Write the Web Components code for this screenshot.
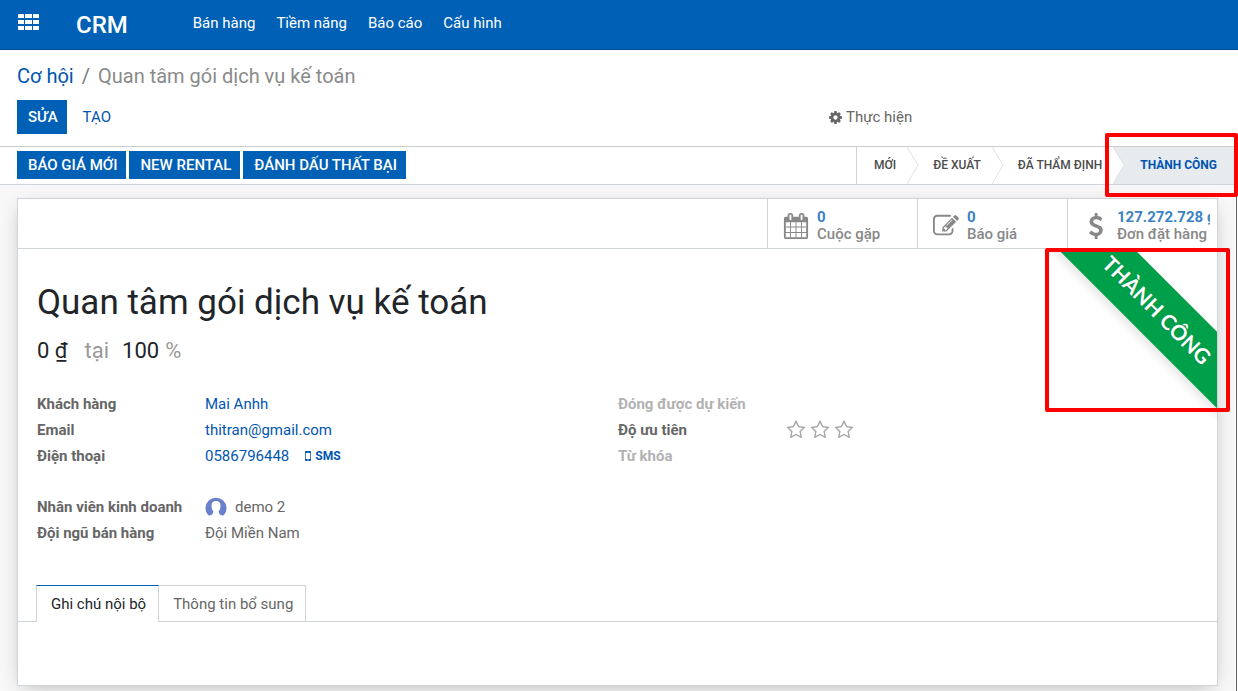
<!DOCTYPE html>
<html lang="vi">
<head>
<meta charset="utf-8">
<meta name="viewport" content="width=device-width, initial-scale=1">
<title>CRM - Quan tâm gói dịch vụ kế toán</title>
<style>
:root { --brand: #0060b6; --link: #0055b0; --line: #ced4da; --text: #666; --mark: #fe0000; }
html, body { margin: 0; height: 100%; }
body { font: 15px/20px Roboto, "Noto Sans", sans-serif; color: var(--text); background: #fff; }
</style>
</head>
<body>
<crm-app></crm-app>
<script>
const define = (name, html, setup) => {
  const template = document.createElement('template');
  template.innerHTML = html;
  customElements.define(name, class extends HTMLElement {
    constructor() {
      super();
      this.attachShadow({ mode: 'open' }).append(template.content.cloneNode(true));
    }
    connectedCallback() { if (setup) setup(this, this.shadowRoot); }
  });
};

const ICONS = {
  cog: 'M1152 896q0-106-75-181t-181-75-181 75-75 181 75 181 181 75 181-75 75-181zm512-109v222q0 12-8 23t-20 13l-185 28q-19 54-39 91 35 50 107 138 10 12 10 25t-9 23q-27 37-99 108t-94 71q-12 0-26-9l-138-108q-44 23-91 38-16 136-29 186-7 28-36 28h-222q-14 0-24.500-8.500t-11.500-21.500l-28-184q-49-16-90-37l-141 107q-10 9-25 9-14 0-25-11-126-114-165-168-7-10-7-23 0-12 8-23 15-21 51-66.500t54-70.500q-27-50-41-99l-183-27q-13-2-21-12.500t-8-23.500v-222q0-12 8-23t19-13l186-28q14-46 39-92-40-57-107-138-10-12-10-24 0-10 9-23 26-36 98.500-107.500t94.500-71.500q13 0 26 10l138 107q44-23 91-38 16-136 29-186 7-28 36-28h222q14 0 24.500 8.500t11.500 21.500l28 184q49 16 90 37l142-107q9-9 24-9 13 0 25 10 129 119 165 170 7 8 7 22 0 12-8 23-15 21-51 66.500t-54 70.500q26 50 41 98l183 28q13 2 21 12.500t8 23.500z',
  calendar: 'M192 1664h288v-288h-288v288zm352 0h320v-288h-320v288zm-352-352h288v-320h-288v320zm352 0h320v-320h-320v320zm-352-384h288v-288h-288v288zm736 736h320v-288h-320v288zm-384-736h320v-288h-320v288zm768 736h288v-288h-288v288zm-384-352h320v-320h-320v320zm-352-864v-288q0-13-9.500-22.500t-22.500-9.500h-64q-13 0-22.500 9.500t-9.500 22.500v288q0 13 9.500 22.500t22.500 9.500h64q13 0 22.500-9.500t9.500-22.500zm736 864h288v-320h-288v320zm-384-384h320v-288h-320v288zm384 0h288v-288h-288v288zm32-480v-288q0-13-9.500-22.500t-22.500-9.500h-64q-13 0-22.500 9.500t-9.500 22.500v288q0 13 9.500 22.500t22.500 9.500h64q13 0 22.500-9.500t9.500-22.500zm384-64v1280q0 52-38 90t-90 38h-1408q-52 0-90-38t-38-90v-1280q0-52 38-90t90-38h128v-96q0-66 47-113t113-47h64q66 0 113 47t47 113v96h384v-96q0-66 47-113t113-47h64q66 0 113 47t47 113v96h128q52 0 90 38t38 90z',
  edit: 'M888 1184l116-116-152-152-116 116v56h96v96h56zm440-720q-16-16-33 1l-350 350q-17 17-1 33t33-1l350-350q17-17 1-33zm80 594v190q0 119-84.500 203.500t-203.500 84.500h-832q-119 0-203.500-84.500t-84.500-203.500v-832q0-119 84.500-203.500t203.500-84.500h832q63 0 117 25 15 7 18 23 3 17-9 29l-49 49q-14 14-32 8-23-6-45-6h-832q-66 0-113 47t-47 113v832q0 66 47 113t113 47h832q66 0 113-47t47-113v-126q0-13 9-22l64-64q15-15 35-7t20 29zm-96-738l288 288-672 672h-288v-288zm444 132l-92 92-288-288 92-92q28-28 68-28t68 28l152 152q28 28 28 68t-28 68z',
  dollar: 'M1362 1185q0 153-99.500 263.500t-258.500 136.500v175q0 14-9 23t-23 9h-135q-13 0-22.500-9.500t-9.500-22.500v-175q-66-9-127.500-31t-101.500-44.500-74-48-46.500-37.500-17.500-18q-17-21-2-41l103-135q7-10 23-12 15-2 24 9l2 2q113 99 243 125 37 8 74 8 81 0 142.500-43t61.500-122q0-28-15-53t-33.500-42-58.500-37.500-66-32-80-32.500q-39-16-61.500-25t-61.500-26.500-62.500-31-56.500-35.500-53.500-42.500-43.500-49-35.500-58-21-66.500-8.500-78q0-138 98-242t255-134v-180q0-13 9.500-22.500t22.500-9.500h135q14 0 23 9t9 23v176q57 6 110.500 23t87 33.500 63.500 37.500 39 29 15 14q17 18 5 38l-81 146q-8 15-23 16-14 3-27-7-3-3-14.500-12t-39-26.500-58.500-32-74.500-26-85.500-11.500q-95 0-155 43t-60 111q0 26 8.500 48t29.500 41.500 39.500 33 56 31 60.500 27 70 27.500q53 20 81 31.500t76 35 75.500 42.500 62 50 53 63.500 31.500 76.500 13 94z',
  star: 'M1201 1004l306-297-422-62-189-382-189 382-422 62 306 297-73 421 378-199 377 199zm527-357q0 22-26 48l-363 354 86 500q1 7 1 20 0 50-41 50-19 0-40-12l-449-236-449 236q-22 12-40 12-21 0-31.500-14.500t-10.500-35.500q0-6 2-20l86-500-364-354q-25-27-25-48 0-37 56-46l502-73 225-455q19-41 49-41t49 41l225 455 502 73q56 9 56 46z',
  mobile: 'M976 1408q0-33-23.500-56.500t-56.500-23.500-56.500 23.500-23.500 56.500 23.500 56.500 56.500 23.500 56.500-23.500 23.500-56.500zm208-160v-704q0-13-9.500-22.500t-22.500-9.500h-512q-13 0-22.500 9.500t-9.500 22.500v704q0 13 9.500 22.500t22.500 9.500h512q13 0 22.500-9.500t9.500-22.500zm-192-848q0-16-16-16h-160q-16 0-16 16t16 16h160q16 0 16-16zm288-16v1024q0 52-38 90t-90 38h-512q-52 0-90-38t-38-90v-1024q0-52 38-90t90-38h512q52 0 90 38t38 90z'
};

define('crm-icon', `
<style>:host{display:inline-block;flex:none;width:16px;height:16px}svg{display:block;width:100%;height:100%;fill:currentColor;overflow:visible}</style>
<svg viewBox="0 0 1792 1792" aria-hidden="true"><path/></svg>`,
(el, root) => root.querySelector('path').setAttribute('d', ICONS[el.getAttribute('name')]));

/* Red frame laid over the area it is placed in */
define('crm-highlight', `
<style>:host{position:absolute;inset:0;border:4px solid var(--mark);border-radius:2px;pointer-events:none;z-index:5}</style>`);

define('crm-button', `
<style>
:host{display:block}
button{display:block;box-sizing:border-box;height:34px;padding:0 9px 0 11px;border:0;margin:0;font:inherit;font-weight:500;line-height:34px;color:#fff;background:var(--brand);text-transform:uppercase;white-space:nowrap;cursor:pointer}
:host([kind=small]) button{height:28px;line-height:28px}
:host([kind=link]) button{background:none;color:var(--link);font-weight:400}
</style>
<button type="button"><slot></slot></button>`);

define('crm-navbar', `
<style>
:host{display:block;background:var(--brand);border-bottom:1px solid #004a8c}
nav{display:flex;align-items:center;height:49px;padding-left:18px;color:#fff}
button{display:block;padding:0;border:0;background:none;color:inherit;margin:0 37px 5px 0}
svg{display:block}
a{color:inherit;text-decoration:none;padding-bottom:4px}
.brand{font-size:24px;line-height:28px;font-weight:500;padding:0}
.menu{display:flex;gap:21px;margin-left:65px}
</style>
<nav>
<button type="button" aria-label="Ứng dụng"><svg width="21" height="16" fill="currentColor"><path d="M0 1q0-1 1-1h4q1 0 1 1v3H0zM7 0h7v4H7zM15 0h5q1 0 1 1v3h-6zM0 6h6v4H0zM7 6h7v4H7zM15 6h6v4h-6zM0 12h6v4H1q-1 0-1-1zM7 12h7v4H7zM15 12h6v3q0 1-1 1h-5z"/></svg></button>
<a class="brand" href="#crm">CRM</a>
<div class="menu"><slot></slot></div>
</nav>`);

define('crm-navlink', `
<style>:host{display:block}a{display:block;color:#fff;text-decoration:none;padding-bottom:4px}</style>
<a href="#menu"><slot></slot></a>`);

define('crm-control-panel', `
<style>
:host{display:block;padding:14px 17px 12px;border-bottom:1px solid #ccc}
.crumbs{display:flex;gap:8px;font-size:20px;line-height:24px;color:#8a8a8a}
a{color:var(--link);text-decoration:none}
i{font-style:normal;color:#777}
.row{display:grid;grid-template-columns:minmax(0,811fr) 393fr;margin-top:12px;align-items:center}
.buttons{display:flex;gap:5px}
.action{display:flex;align-items:center;gap:3px;justify-self:start;padding:0;border:0;background:none;font:inherit;color:inherit}
</style>
<div class="crumbs"><a href="#leads">Cơ hội</a><i>/</i><span>Quan tâm gói dịch vụ kế toán</span></div>
<div class="row">
<div class="buttons"><crm-button>Sửa</crm-button><crm-button kind="link">Tạo</crm-button></div>
<button class="action" type="button"><crm-icon name="cog" style="width:15px;height:15px"></crm-icon>Thực hiện</button>
</div>`);

define('crm-stage', `
<style>
:host{display:flex;position:relative;align-items:stretch;font-size:12px;font-weight:500;color:#4c4c4c}
button{border:0;background:none;margin:0;padding:0 11px 2px 14px;font:inherit;color:inherit;text-transform:uppercase;white-space:nowrap}
svg{display:block;flex:none}
polygon{fill:#fff}polyline{fill:none;stroke:#dee2e6}
:host([first]) svg{display:none}
:host([first]) button{padding-left:17px}
:host([current]){background:#e8ebee;color:var(--link)}
:host([current]) button{padding:0 19px 2px 15px;font-weight:700}
.mark{display:none;position:absolute;inset:-14px -2px -13px -8px}
:host([current]) .mark{display:block}
</style>
<svg width="12" height="37"><polygon points="0,0 11,18 0,37"/><polyline points="0,0 11,18 0,37"/></svg>
<button type="button"><slot></slot></button>
<div class="mark"><crm-highlight></crm-highlight></div>`);

define('crm-statusbar', `
<style>
:host{display:flex;justify-content:space-between;height:37px;padding-left:17px;margin-right:2px;border-bottom:1px solid var(--line)}
.actions{display:flex;gap:3px;align-items:center;padding-bottom:1px}
.stages{display:flex;border-left:1px solid var(--line)}
</style>
<div class="actions"><slot name="action"></slot></div>
<div class="stages"><slot></slot></div>`);

define('crm-stat', `
<style>
:host{display:block;width:150px;box-sizing:border-box;border-left:1px solid var(--line)}
button{display:flex;align-items:center;width:100%;height:49px;padding:5px 7px 0 15px;border:0;background:none;font:inherit;font-weight:500;line-height:17px;color:#888;text-align:left}
crm-icon{width:26px;height:26px;margin-right:8px}
.text{flex:1;min-width:0;overflow:hidden;white-space:nowrap}
b{display:block;font-weight:700;color:#3b82c4}
</style>
<button type="button"><crm-icon></crm-icon><span class="text"><b><slot name="value"></slot></b><slot></slot></span></button>`,
(el, root) => {
  const icon = root.querySelector('crm-icon');
  icon.setAttribute('name', el.getAttribute('icon'));
  if (icon.connectedCallback) icon.connectedCallback();
});

define('crm-ribbon', `
<style>
:host{position:absolute;top:0;right:0;width:170px;height:170px}
.clip{position:absolute;inset:0;overflow:hidden}
span{position:absolute;top:34px;right:-62px;width:244px;height:54px;line-height:54px;text-align:center;transform:rotate(45deg);background:#00a04a;color:#fff;font-family:Lato,sans-serif;font-size:21px;font-weight:700;white-space:nowrap;box-shadow:0 5px 10px rgba(0,0,0,.1);text-shadow:0 1px 1px rgba(0,0,0,.2)}
.mark{position:absolute;inset:-1px -13px 7px -2px}
</style>
<div class="clip"><span><slot></slot></span></div>
<div class="mark"><crm-highlight></crm-highlight></div>`);

define('crm-field', `
<style>
:host{display:grid;grid-template-columns:168px minmax(0,1fr);height:26px;align-items:center}
.label{font-weight:700;color:#666}
:host([muted]) .label{color:#b2b2b2}
.value{display:flex;align-items:center}
</style>
<span class="label"><slot name="label"></slot></span><span class="value"><slot></slot></span>`);

define('crm-link', `
<style>:host{display:block}a{display:flex;align-items:center;color:var(--link);text-decoration:none}
:host([small]) a{font-size:12px;font-weight:700}:host([small]){margin-left:12px}</style>
<a href="#record"><slot></slot></a>`);

define('crm-avatar', `
<style>:host{display:block;margin-right:8px}svg{display:block}</style>
<svg width="22" height="22" role="img" aria-label="Ảnh đại diện"><path fill="#6a80cb" d="M3 19A10.500 10.500 0 1 1 19 19Q17.500 20 15 18.500Q13.500 17 13.800 15Q15.500 13 15.500 9.500Q15.500 5 11 5Q6.500 5 6.500 9.500Q6.500 13 8.200 15Q8.500 17 7 18.500Q4.500 20 3 19z"/></svg>`);

define('crm-priority', `
<style>:host{display:flex;gap:4px}button{display:block;padding:0;border:0;background:none;color:#a8a8a8}crm-icon{display:block;width:20px;height:20px}</style>
<button type="button" aria-label="Trung bình"><crm-icon name="star"></crm-icon></button>
<button type="button" aria-label="Cao"><crm-icon name="star"></crm-icon></button>
<button type="button" aria-label="Rất cao"><crm-icon name="star"></crm-icon></button>`);

define('crm-tab', `
<style>
:host{display:block}
button{display:block;height:36px;padding:0 12px 0 14px;margin:0;border:1px solid var(--line);border-width:1px 1px 0 0;background:#fff;font:inherit;color:inherit;white-space:nowrap}
:host([active]) button{height:37px;border-left-width:1px;border-top-color:var(--brand);color:#212529}
</style>
<button type="button" role="tab"><slot></slot></button>`);

define('crm-notebook', `
<style>
:host{display:block}
.tabs{display:flex;align-items:flex-start;height:36px;padding:0 18px;border-bottom:1px solid var(--line)}
.page{height:63px}
</style>
<div class="tabs" role="tablist"><slot></slot></div><div class="page" role="tabpanel"></div>`);

define('crm-sheet', `
<style>
:host{display:block;position:relative;border:1px solid var(--line);background:#fff;box-shadow:0 5px 20px -6px rgba(0,0,0,.3)}
.stats{display:flex;justify-content:flex-end;height:49px;border-bottom:1px solid var(--line)}
.body{position:relative;padding:33px 18px 0 19px}
h1{margin:0;font-size:35px;line-height:42px;font-weight:400;color:#212529}
h2{display:flex;margin:14px 0 0;font-size:22px;line-height:26px;font-weight:400;color:#212529}
h2 span{color:#999}
.at{margin:0 13px 0 17px}.pc{margin-left:6px}
.groups{display:grid;grid-template-columns:1fr 1fr;margin-top:27px;row-gap:25px}
.notebook{margin-top:39px}
</style>
<div class="stats">
<crm-stat icon="calendar"><span slot="value">0</span>Cuộc gặp</crm-stat>
<crm-stat icon="edit"><span slot="value">0</span>Báo giá</crm-stat>
<crm-stat icon="dollar"><span slot="value">127.272.728 ₫</span>Đơn đặt hàng</crm-stat>
</div>
<div class="body">
<crm-ribbon>THÀNH CÔNG</crm-ribbon>
<h1>Quan tâm gói dịch vụ kế toán</h1>
<h2>0 ₫<span class="at">tại</span>100<span class="pc">%</span></h2>
<div class="groups">
<div>
<crm-field><span slot="label">Khách hàng</span><crm-link>Mai Anhh</crm-link></crm-field>
<crm-field><span slot="label">Email</span><crm-link>thitran@gmail.com</crm-link></crm-field>
<crm-field><span slot="label">Điện thoại</span><crm-link>0586796448</crm-link><crm-link small><crm-icon name="mobile" style="width:14px;height:14px"></crm-icon>SMS</crm-link></crm-field>
</div>
<div>
<crm-field muted><span slot="label">Đóng được dự kiến</span></crm-field>
<crm-field><span slot="label">Độ ưu tiên</span><crm-priority></crm-priority></crm-field>
<crm-field muted><span slot="label">Từ khóa</span></crm-field>
</div>
<div>
<crm-field><span slot="label">Nhân viên kinh doanh</span><crm-avatar></crm-avatar>demo 2</crm-field>
<crm-field><span slot="label">Đội ngũ bán hàng</span>Đội Miền Nam</crm-field>
</div>
</div>
</div>
<crm-notebook class="notebook"><crm-tab active>Ghi chú nội bộ</crm-tab><crm-tab>Thông tin bổ sung</crm-tab></crm-notebook>`);

define('crm-app', `
<style>
:host{display:flex;flex-direction:column;min-height:100%;overflow:hidden}
main{flex:1;padding:13px 18px 5px 17px;margin-right:1px;border-right:1px solid #666;background:#f8f8f8}
crm-sheet{display:block}
</style>
<crm-navbar><crm-navlink>Bán hàng</crm-navlink><crm-navlink>Tiềm năng</crm-navlink><crm-navlink>Báo cáo</crm-navlink><crm-navlink>Cấu hình</crm-navlink></crm-navbar>
<crm-control-panel></crm-control-panel>
<crm-statusbar>
<crm-button slot="action" kind="small">Báo giá mới</crm-button>
<crm-button slot="action" kind="small">New Rental</crm-button>
<crm-button slot="action" kind="small">Đánh dấu thất bại</crm-button>
<crm-stage first>Mới</crm-stage><crm-stage>Đề xuất</crm-stage><crm-stage>Đã thẩm định</crm-stage><crm-stage current>Thành công</crm-stage>
</crm-statusbar>
<main><crm-sheet></crm-sheet></main>`);
</script>
</body>
</html>
